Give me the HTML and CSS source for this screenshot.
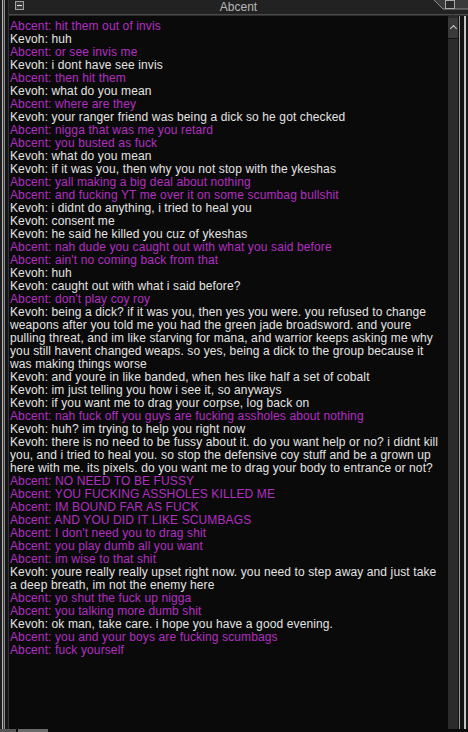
FILE: index.html
```html
<!DOCTYPE html>
<html lang="en">
<head>
    <meta charset="UTF-8">
    <title>Abcent</title>
    <link rel="stylesheet" href="styles.css">
</head>
<body>
<div class="window">
    <div class="frame">
        <div class="edge-left"></div>
        <div class="pane">
            <div class="titlebar">
                <span class="min-btn"></span>
                <span class="title">Abcent</span>
                <svg class="notch" width="34" height="14" viewBox="0 0 34 14">
                    <polygon points="0,0 34,0 34,9 9,9" fill="#3a3a3a"/>
                    <polyline points="0,0 9,9 34,9" fill="none" stroke="#8a8a8a" stroke-width="1"/>
                    <rect x="11.5" y="0.5" width="9" height="8" fill="#2a2a2a" stroke="#a8a8a8"/>
                </svg>
            </div>
            <div class="body">
                <div class="log">
                    <div class="msg them">Abcent: hit them out of invis</div>
                    <div class="msg me">Kevoh: huh</div>
                    <div class="msg them">Abcent: or see invis me</div>
                    <div class="msg me">Kevoh: i dont have see invis</div>
                    <div class="msg them">Abcent: then hit them</div>
                    <div class="msg me">Kevoh: what do you mean</div>
                    <div class="msg them">Abcent: where are they</div>
                    <div class="msg me">Kevoh: your ranger friend was being a dick so he got checked</div>
                    <div class="msg them">Abcent: nigga that was me you retard</div>
                    <div class="msg them">Abcent: you busted as fuck</div>
                    <div class="msg me">Kevoh: what do you mean</div>
                    <div class="msg me">Kevoh: if it was you, then why you not stop with the ykeshas</div>
                    <div class="msg them">Abcent: yall making a big deal about nothing</div>
                    <div class="msg them">Abcent: and fucking YT me over it on some scumbag bullshit</div>
                    <div class="msg me">Kevoh: i didnt do anything, i tried to heal you</div>
                    <div class="msg me">Kevoh: consent me</div>
                    <div class="msg me">Kevoh: he said he killed you cuz of ykeshas</div>
                    <div class="msg them">Abcent: nah dude you caught out with what you said before</div>
                    <div class="msg them">Abcent: ain't no coming back from that</div>
                    <div class="msg me">Kevoh: huh</div>
                    <div class="msg me">Kevoh: caught out with what i said before?</div>
                    <div class="msg them">Abcent: don't play coy roy</div>
                    <div class="msg me">Kevoh: being a dick? if it was you, then yes you were. you refused to change weapons after you told me you had the green jade broadsword. and youre pulling threat, and im like starving for mana, and warrior keeps asking me why you still havent changed weaps. so yes, being a dick to the group because it was making things worse</div>
                    <div class="msg me">Kevoh: and youre in like banded, when hes like half a set of cobalt</div>
                    <div class="msg me">Kevoh: im just telling you how i see it, so anyways</div>
                    <div class="msg me">Kevoh: if you want me to drag your corpse, log back on</div>
                    <div class="msg them">Abcent: nah fuck off you guys are fucking assholes about nothing</div>
                    <div class="msg me">Kevoh: huh? im trying to help you right now</div>
                    <div class="msg me">Kevoh: there is no need to be fussy about it. do you want help or no? i didnt kill you, and i tried to heal you. so stop the defensive coy stuff and be a grown up here with me. its pixels. do you want me to drag your body to entrance or not?</div>
                    <div class="msg them">Abcent: NO NEED TO BE FUSSY</div>
                    <div class="msg them">Abcent: YOU FUCKING ASSHOLES KILLED ME</div>
                    <div class="msg them">Abcent: IM BOUND FAR AS FUCK</div>
                    <div class="msg them">Abcent: AND YOU DID IT LIKE SCUMBAGS</div>
                    <div class="msg them">Abcent: I don't need you to drag shit</div>
                    <div class="msg them">Abcent: you play dumb all you want</div>
                    <div class="msg them">Abcent: im wise to that shit</div>
                    <div class="msg me">Kevoh: youre really really upset right now. you need to step away and just take a deep breath, im not the enemy here</div>
                    <div class="msg them">Abcent: yo shut the fuck up nigga</div>
                    <div class="msg them">Abcent: you talking more dumb shit</div>
                    <div class="msg me">Kevoh: ok man, take care. i hope you have a good evening.</div>
                    <div class="msg them">Abcent: you and your boys are fucking scumbags</div>
                    <div class="msg them">Abcent: fuck yourself</div>
                </div>
                <div class="scrollbar">
                    <div class="scroll-up"><span class="caret"></span></div>
                    <div class="scroll-track"></div>
                </div>
                <div class="edge-right"></div>
            </div>
        </div>
    </div>
    <div class="bottom">
        <span class="bottom-a"></span>
        <span class="bottom-b"></span>
    </div>
</div>
</body>
</html>
```

FILE: styles.css
```css
body {
    margin: 0;
    padding: 0;
    background-color: #0a0a0a;
    font-family: "Liberation Sans", Arial, sans-serif;
}

.window {
    width: 468px;
    height: 732px;
    display: flex;
    flex-direction: column;
    background-color: #0a0a0a;
    overflow: hidden;
}

.frame {
    flex: 1;
    display: flex;
    min-height: 0;
}

.edge-left {
    width: 9px;
    flex-shrink: 0;
    background: linear-gradient(to right,
        #1c1c1c 0 2px, #b5b5b5 2px 3px, #3a3a3a 3px 4px,
        #8c8c8c 4px 5px, #161616 5px 8px, #333 8px 9px);
}

.pane {
    flex: 1;
    display: flex;
    flex-direction: column;
    min-width: 0;
}

.titlebar {
    height: 14px;
    position: relative;
    background-color: #222;
    border-bottom: 1px solid #4a4a4a;
    display: flex;
    align-items: center;
    justify-content: center;
}

.title {
    color: #b8b8b8;
    font-size: 12px;
    line-height: 14px;
}

.min-btn {
    position: absolute;
    left: 6px;
    top: 1px;
    width: 7px;
    height: 7px;
    border: 1px solid #a0a0a0;
    background-color: #3a3a3a;
}

.min-btn::after {
    content: "";
    position: absolute;
    left: 1px;
    top: 3px;
    width: 5px;
    height: 1px;
    background-color: #e0e0e0;
}

.notch {
    position: absolute;
    right: 0;
    top: 0;
}

.body {
    flex: 1;
    display: flex;
    border-top: 1px solid #2e2e2e;
    min-height: 0;
}

.log {
    flex: 1;
    padding: 4px 0 0 1px;
    font-size: 12px;
    line-height: 13px;
    letter-spacing: 0.12px;
    overflow: hidden;
}

.msg.me {
    color: #e4e4e4;
}

.msg.them {
    color: #b22ec2;
}

.scrollbar {
    width: 10px;
    margin-left: 2px;
    padding-top: 2px;
    display: flex;
    flex-direction: column;
    background-color: #2a2a2a;
}

.scroll-up {
    height: 21px;
    background-color: #3a3a3a;
    border-bottom: 1px solid #151515;
    display: flex;
    justify-content: center;
    padding-top: 8px;
    box-sizing: border-box;
}

.caret {
    width: 4px;
    height: 4px;
    border-left: 1px solid #cfcfcf;
    border-top: 1px solid #cfcfcf;
    transform: rotate(45deg);
}

.scroll-track {
    flex: 1;
    background-color: #2b2b2b;
}

.edge-right {
    width: 10px;
    flex-shrink: 0;
    background: linear-gradient(to right,
        #121212 0 1px, #9a9a9a 1px 2px, #141414 2px 6px,
        #c4c4c4 6px 8px, #1a1a1a 8px 10px);
}

.bottom {
    height: 3px;
    display: flex;
    background-color: #0a0a0a;
}

.bottom-a {
    width: 16px;
    background-color: #555;
}

.bottom-b {
    width: 30px;
    margin-left: 2px;
    background-color: #6a6a6a;
}
```
